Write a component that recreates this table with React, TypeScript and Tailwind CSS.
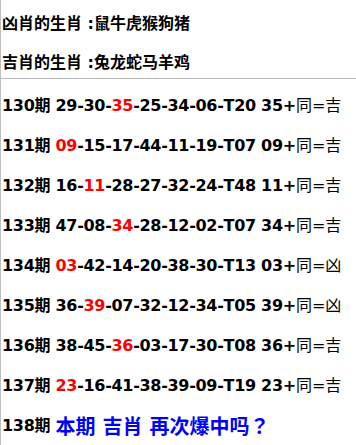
const rows: { no: string; red: string; before: string; after: string; tail: string; res: string }[] = [
  { no: "130", before: "29-30-", red: "35", after: "-25-34-06-T20", tail: "35+", res: "吉" },
  { no: "131", before: "", red: "09", after: "-15-17-44-11-19-T07", tail: "09+", res: "吉" },
  { no: "132", before: "16-", red: "11", after: "-28-27-32-24-T48", tail: "11+", res: "吉" },
  { no: "133", before: "47-08-", red: "34", after: "-28-12-02-T07", tail: "34+", res: "吉" },
  { no: "134", before: "", red: "03", after: "-42-14-20-38-30-T13", tail: "03+", res: "凶" },
  { no: "135", before: "36-", red: "39", after: "-07-32-12-34-T05", tail: "39+", res: "凶" },
  { no: "136", before: "38-45-", red: "36", after: "-03-17-30-T08", tail: "36+", res: "吉" },
  { no: "137", before: "", red: "23", after: "-16-41-38-39-09-T19", tail: "23+", res: "吉" },
];

export default function App() {
  return (
    <div
      className="w-[356px] h-[445px] bg-white border-l border-[#c0c0c0] overflow-hidden text-black text-[16px]"
      style={{ fontFamily: '"DejaVu Sans", "Noto Sans CJK SC", sans-serif' }}
    >
      <div className="pt-1 pl-[1px]">
        <div className="h-10 flex items-center font-bold">凶肖的生肖 :鼠牛虎猴狗猪</div>
        <div className="mt-1 h-[30px] flex items-center font-bold">吉肖的生肖 :兔龙蛇马羊鸡</div>
      </div>
      <div className="h-px bg-[#b8b8b8]" />
      <div className="pt-[7px] pl-[1px]">
        {rows.map((r) => (
          <div key={r.no} className="h-10 flex items-center whitespace-nowrap">
            <span className="font-bold tracking-[-0.3px]">
              {r.no}期 {r.before}
              <span className="text-[#ff0000]">{r.red}</span>
              {r.after} {r.tail}
            </span>
            <span>同=</span>
            <span>{r.res}</span>
          </div>
        ))}
        <div className="h-10 flex items-center whitespace-nowrap">
          <span className="font-bold tracking-[-0.3px]">138期&nbsp;</span>
          <span className="font-bold text-[20px] text-[#0000ff]">
            本期 吉肖 再次爆中吗
            <span style={{ fontFamily: '"Noto Sans CJK JP", sans-serif' }}>？</span>
          </span>
        </div>
      </div>
    </div>
  );
}
